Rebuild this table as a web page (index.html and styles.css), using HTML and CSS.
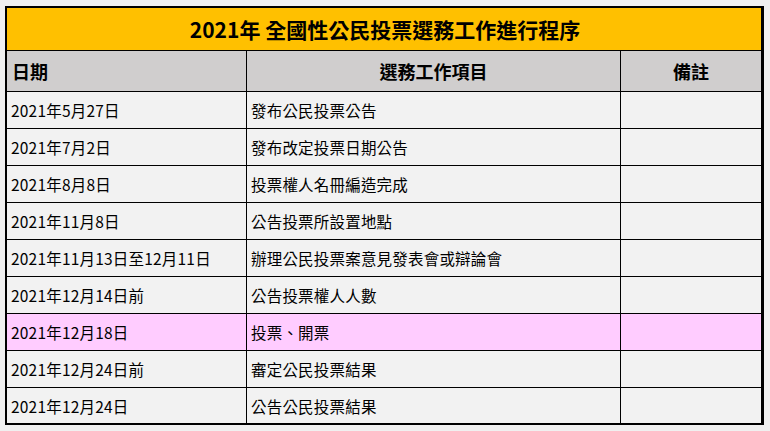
FILE: index.html
```html
<!DOCTYPE html>
<html lang="zh-Hant">
<head>
<meta charset="utf-8">
<title>2021年 全國性公民投票選務工作進行程序</title>
<link rel="stylesheet" href="styles.css">
</head>
<body>
<div class="sheet">
  <div class="title">2021年 全國性公民投票選務工作進行程序</div>
  <div class="hd left">日期</div>
  <div class="hd">選務工作項目</div>
  <div class="hd last">備註</div>

  <div class="c">2021年5月27日</div><div class="c">發布公民投票公告</div><div class="c last"></div>
  <div class="c">2021年7月2日</div><div class="c">發布改定投票日期公告</div><div class="c last"></div>
  <div class="c">2021年8月8日</div><div class="c">投票權人名冊編造完成</div><div class="c last"></div>
  <div class="c">2021年11月8日</div><div class="c">公告投票所設置地點</div><div class="c last"></div>
  <div class="c">2021年11月13日至12月11日</div><div class="c">辦理公民投票案意見發表會或辯論會</div><div class="c last"></div>
  <div class="c">2021年12月14日前</div><div class="c">公告投票權人人數</div><div class="c last"></div>
  <div class="c pink">2021年12月18日</div><div class="c pink">投票、開票</div><div class="c pink last"></div>
  <div class="c">2021年12月24日前</div><div class="c">審定公民投票結果</div><div class="c last"></div>
  <div class="c end">2021年12月24日</div><div class="c end">公告公民投票結果</div><div class="c end last"></div>
</div>
</body>
</html>
```
FILE: styles.css
```css
html, body {
  margin: 0;
  background: #f0f0f0;
}
body {
  padding: 6px 0 0 5px;
  font-family: "Noto Sans CJK TC", "Noto Sans", sans-serif;
  color: #000;
}
.sheet {
  width: 754px;
  display: grid;
  grid-template-columns: 240px 374px 140px;
  grid-template-rows: 43px 41px repeat(8, 37px) 35px;
  border-style: solid;
  border-color: #000;
  border-width: 2px 3px 2px 2px;
  background: #f2f2f2;
}
.sheet > div {
  box-sizing: border-box;
  border-right: 1px solid #000;
  border-bottom: 1px solid #000;
  display: flex;
  align-items: center;
  white-space: nowrap;
}
.sheet > .last { border-right: none; }
.sheet > .end { border-bottom: none; }
.title {
  grid-column: 1 / 4;
  background: #ffc000;
  justify-content: center;
  font-size: 21px;
  font-weight: bold;
  border-right: none !important;
  padding-left: 2px;
}
.hd {
  background: #d0cece;
  justify-content: center;
  font-size: 18px;
  font-weight: bold;
}
.hd.left {
  justify-content: flex-start;
  padding-left: 5px;
}
.c {
  font-size: 15.5px;
  padding-left: 4px;
  letter-spacing: 0.2px;
}
.pink { background: #ffccff; }
```
